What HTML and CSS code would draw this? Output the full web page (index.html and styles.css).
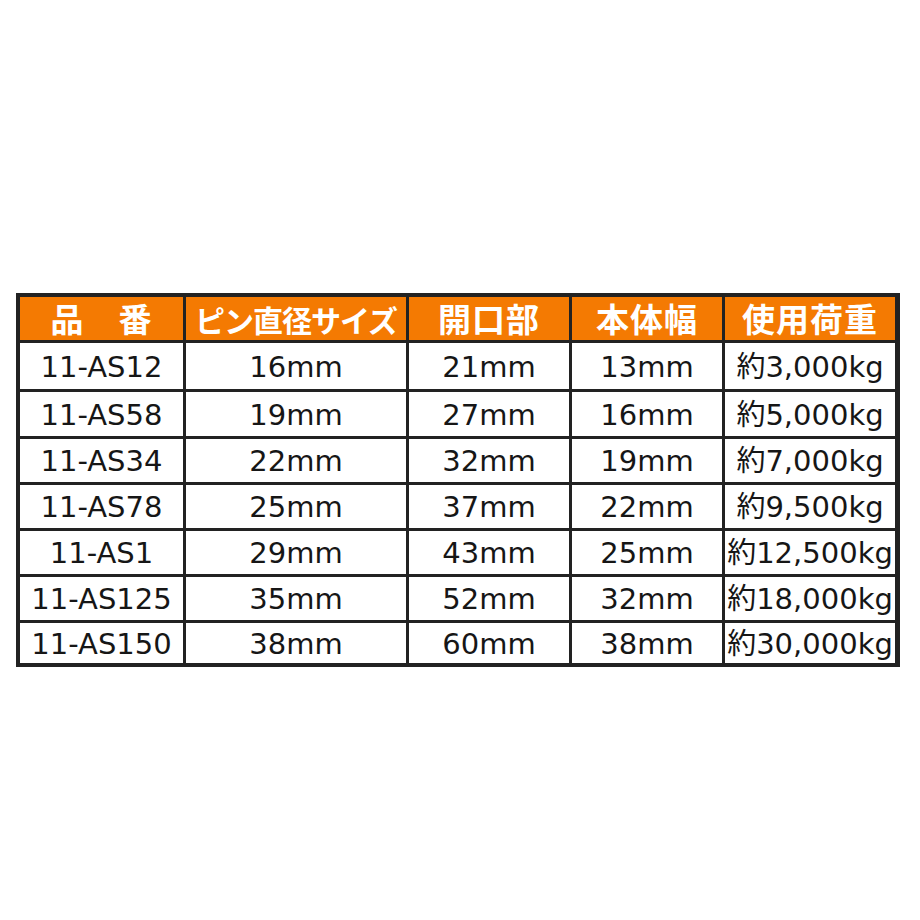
FILE: index.html
```html
<!DOCTYPE html>
<html lang="ja">
<head>
<meta charset="utf-8">
<link rel="stylesheet" href="styles.css">
</head>
<body>
<div class="spec">
  <div class="hd">品　番</div>
  <div class="hd hd-tight">ピン直径サイズ</div>
  <div class="hd">開口部</div>
  <div class="hd">本体幅</div>
  <div class="hd">使用荷重</div>

  <div class="cell">11-AS12</div><div class="cell">16mm</div><div class="cell">21mm</div><div class="cell">13mm</div><div class="cell">約3,000kg</div>
  <div class="cell">11-AS58</div><div class="cell">19mm</div><div class="cell">27mm</div><div class="cell">16mm</div><div class="cell">約5,000kg</div>
  <div class="cell">11-AS34</div><div class="cell">22mm</div><div class="cell">32mm</div><div class="cell">19mm</div><div class="cell">約7,000kg</div>
  <div class="cell">11-AS78</div><div class="cell">25mm</div><div class="cell">37mm</div><div class="cell">22mm</div><div class="cell">約9,500kg</div>
  <div class="cell">11-AS1</div><div class="cell">29mm</div><div class="cell">43mm</div><div class="cell">25mm</div><div class="cell">約12,500kg</div>
  <div class="cell">11-AS125</div><div class="cell">35mm</div><div class="cell">52mm</div><div class="cell">32mm</div><div class="cell">約18,000kg</div>
  <div class="cell">11-AS150</div><div class="cell">38mm</div><div class="cell">60mm</div><div class="cell">38mm</div><div class="cell">約30,000kg</div>
</div>
</body>
</html>
```
FILE: styles.css
```css
html, body {
  margin: 0;
  padding: 0;
  background: #ffffff;
}
body {
  padding: 293px 0 0 16px;
}
.spec {
  display: grid;
  width: 876px;
  grid-template-columns: 163px 220px 160px 150px 170px;
  grid-template-rows: 43px 46px 44px 43px 43px 43px 43px 40px;
  gap: 3px;
  padding: 4px 4px 4px 4px;
  background: #222222;
  box-sizing: content-box;
}
.hd {
  background: #f47a02;
  color: #ffffff;
  font-family: "Noto Sans CJK JP", sans-serif;
  font-weight: 700;
  font-size: 33px;
  letter-spacing: 1px;
  display: flex;
  align-items: center;
  justify-content: center;
  white-space: nowrap;
  line-height: 1;
}
.hd-tight {
  font-size: 30px;
  letter-spacing: -1px;
}
.cell {
  background: #ffffff;
  color: #161616;
  font-family: "DejaVu Sans", "Noto Sans CJK JP", sans-serif;
  font-size: 29px;
  display: flex;
  align-items: center;
  justify-content: center;
  white-space: nowrap;
  line-height: 1;
  padding-top: 2px;
  box-sizing: border-box;
}
```
